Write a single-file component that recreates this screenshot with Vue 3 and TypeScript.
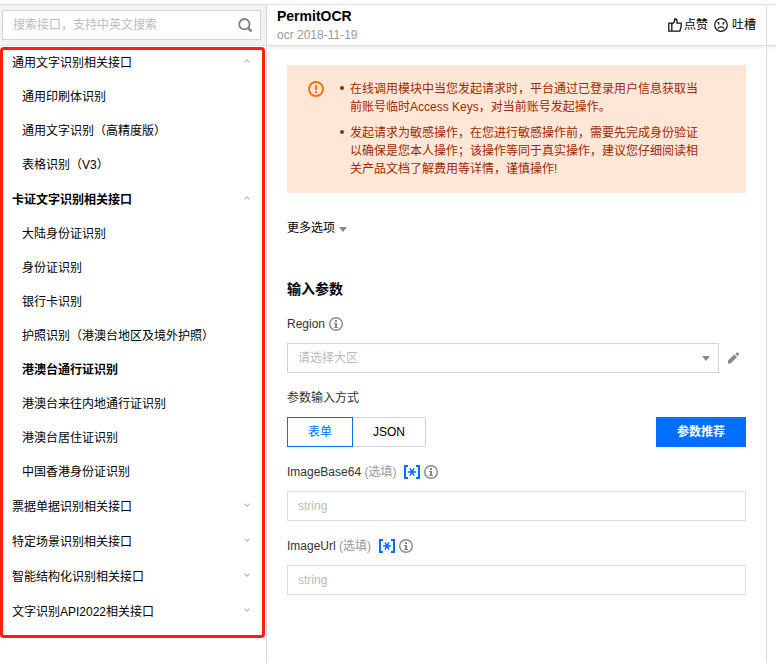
<script setup lang="ts">
import { ref } from 'vue'

interface ApiGroup {
  title: string
  open: boolean
  items: string[]
}

interface Param {
  name: string
  value: string
}

const groups = ref<ApiGroup[]>([
  { title: '通用文字识别相关接口', open: true, items: ['通用印刷体识别', '通用文字识别（高精度版）', '表格识别（V3）'] },
  {
    title: '卡证文字识别相关接口',
    open: true,
    items: [
      '大陆身份证识别',
      '身份证识别',
      '银行卡识别',
      '护照识别（港澳台地区及境外护照）',
      '港澳台通行证识别',
      '港澳台来往内地通行证识别',
      '港澳台居住证识别',
      '中国香港身份证识别',
    ],
  },
  { title: '票据单据识别相关接口', open: false, items: [] },
  { title: '特定场景识别相关接口', open: false, items: [] },
  { title: '智能结构化识别相关接口', open: false, items: [] },
  { title: '文字识别API2022相关接口', open: false, items: [] },
])

const keyword = ref('')
const current = ref('港澳台通行证识别')
const region = ref('')
const mode = ref<'form' | 'json'>('form')
const params = ref<Param[]>([
  { name: 'ImageBase64', value: '' },
  { name: 'ImageUrl', value: '' },
])
</script>

<template>
  <div class="page">
    <aside class="sidebar">
      <form class="search" @submit.prevent>
        <div class="search-box">
          <input v-model="keyword" type="text" aria-label="搜索接口" placeholder="搜索接口，支持中英文搜索" />
          <button type="submit" class="icon-btn" aria-label="搜索">
            <svg width="16" height="16" viewBox="0 0 16 16" fill="none" stroke="#808080" stroke-width="1.8">
              <circle cx="7.4" cy="7.2" r="5.2" />
              <path d="M11 10.8 14.6 14.4" stroke-width="2.4" />
            </svg>
          </button>
        </div>
      </form>
      <nav class="menu">
        <section v-for="group in groups" :key="group.title" class="group">
          <button
            type="button"
            class="row group-title"
            :class="{ active: group.items.includes(current) }"
            :aria-expanded="group.open"
            @click="group.open = !group.open"
          >
            <span>{{ group.title }}</span>
            <svg width="6" height="4" viewBox="0 0 6 4" fill="none" stroke="#bbb" stroke-width="1.2">
              <path :d="group.open ? 'M.4 3.4 3 .9 5.6 3.4' : 'M.4.6 3 3.1 5.6.6'" />
            </svg>
          </button>
          <template v-if="group.open">
            <a
              v-for="item in group.items"
              :key="item"
              href="#"
              class="row item"
              :class="{ active: item === current }"
              @click.prevent="current = item"
            >{{ item }}</a>
          </template>
        </section>
      </nav>
    </aside>

    <main class="main">
      <header class="bar">
        <div>
          <h1>PermitOCR</h1>
          <p class="version">ocr 2018-11-19</p>
        </div>
        <div class="feedback">
          <button type="button">
            <svg width="14" height="14" viewBox="0 0 14 14" fill="none" stroke="#111" stroke-width="1.3" stroke-linejoin="round">
              <path d="M.8 5.2h3v8h-3zM3.8 6.2 6.6 3.6V1.4c0-.9 2.4-.9 2.4 1v2.8h4.2v3.2l-1.4 4.8h-8" />
            </svg>
            <span>点赞</span>
          </button>
          <button type="button" class="wide">
            <svg width="14" height="14" viewBox="0 0 14 14" fill="none" stroke="#111" stroke-width="1.2">
              <circle cx="7" cy="7" r="6.3" />
              <path d="M4 10.4c1-2 5-2 6 0M3.4 4.4l2 .9M10.6 4.4l-2 .9" />
              <circle cx="4.8" cy="5.9" r=".5" fill="#111" stroke-width=".5" />
              <circle cx="9.2" cy="5.9" r=".5" fill="#111" stroke-width=".5" />
            </svg>
            <span>吐槽</span>
          </button>
        </div>
      </header>

      <div class="content">
        <div class="alert" role="alert">
          <svg width="16" height="16" viewBox="0 0 16 16" fill="none" stroke="#ff7200" stroke-width="2">
            <circle cx="8" cy="8" r="7" />
            <path d="M8 4v5M8 10v2" />
          </svg>
          <ul>
            <li>在线调用模块中当您发起请求时，平台通过已登录用户信息获取当前账号临时Access Keys，对当前账号发起操作。</li>
            <li>发起请求为敏感操作，在您进行敏感操作前，需要先完成身份验证以确保是您本人操作；该操作等同于真实操作，建议您仔细阅读相关产品文档了解费用等详情，谨慎操作!</li>
          </ul>
        </div>

        <button type="button" class="more">
          <span>更多选项</span>
          <svg width="8" height="5" viewBox="0 0 8 5"><path d="M0 0h8L4 5z" fill="#888" /></svg>
        </button>

        <h2>输入参数</h2>

        <div class="field">
          <div class="label">
            <label for="region">Region</label>
            <svg class="info" width="14" height="14" viewBox="0 0 14 14">
              <circle cx="7" cy="7" r="6.3" fill="none" stroke="#888" stroke-width="1.4" />
              <path d="M6 3h2v2H6zM5 6h3v4h1v1H5v-1h1V7H5z" fill="#888" />
            </svg>
          </div>
          <div class="region">
            <div class="select">
              <select id="region" v-model="region">
                <option value="" disabled>请选择大区</option>
                <option value="ap-guangzhou">ap-guangzhou</option>
              </select>
              <svg width="8" height="5" viewBox="0 0 8 5"><path d="M0 0h8L4 5z" fill="#888" /></svg>
            </div>
            <button type="button" class="icon-btn" aria-label="编辑">
              <svg width="12" height="12" viewBox="0 0 12 12" fill="#888">
                <path d="M0 8.6 6.4 2.4 9 5 2.6 11.4H0zM7.4 2 8.8.6 10.8 2.6 9.6 4.2z" />
                <path d="M8.6.4 9.4 0 11.4 2 10.8 2.8z" />
              </svg>
            </button>
          </div>
        </div>

        <div class="field">
          <div class="label">参数输入方式</div>
          <div class="modes">
            <div class="segment" role="group" aria-label="参数输入方式">
              <button type="button" class="form-mode" :class="{ on: mode === 'form' }" :aria-pressed="mode === 'form'" @click="mode = 'form'">表单</button>
              <button type="button" :class="{ on: mode === 'json' }" :aria-pressed="mode === 'json'" @click="mode = 'json'">JSON</button>
            </div>
            <button type="button" class="primary">参数推荐</button>
          </div>
        </div>

        <div v-for="param in params" :key="param.name" class="field">
          <div class="label">
            <label :for="param.name">{{ param.name }} <span class="optional">(选填)</span></label>
            <svg class="token" width="16" height="14" viewBox="0 0 16 14" fill="none" stroke="#006eff">
              <path d="M4 1H1v12h3M12 1h3v12h-3" stroke-width="2" />
              <path d="M4 7h8M6 3.4l4 7.2M10 3.4 6 10.6" stroke-width="1.5" />
            </svg>
            <svg class="info" width="14" height="14" viewBox="0 0 14 14">
              <circle cx="7" cy="7" r="6.3" fill="none" stroke="#888" stroke-width="1.4" />
              <path d="M6 3h2v2H6zM5 6h3v4h1v1H5v-1h1V7H5z" fill="#888" />
            </svg>
          </div>
          <input :id="param.name" v-model="param.value" class="text" type="text" placeholder="string" />
        </div>
      </div>
    </main>

    <div class="next-panel"><div class="bar"></div></div>
  </div>
</template>

<style>
body {
  margin: 0;
  background: #fff;
}
</style>

<style scoped>
* {
  box-sizing: border-box;
}

.page {
  display: grid;
  grid-template-columns: 267px minmax(0, 1fr) 10px;
  min-height: calc(100vh - 4px);
  margin-top: 4px;
  border-top: 1px solid #ddd;
  background: #fff;
  color: #000;
  font: 12px/18px "Liberation Sans", "Noto Sans CJK SC", sans-serif;
}

button {
  padding: 0;
  border: 0;
  background: none;
  color: inherit;
  font: inherit;
  cursor: pointer;
}

svg {
  display: block;
  flex: none;
}

h1,
h2,
p,
ul {
  margin: 0;
  padding: 0;
}

.sidebar {
  border-right: 1px solid #d8d8d8;
}

.search {
  height: 40px;
  padding: 5px 5px 5px 2px;
  background: #f2f2f2;
}

.search-box {
  display: flex;
  align-items: center;
  height: 30px;
  padding: 0 7px 0 10px;
  border: 1px solid #cfd5de;
  background: #fff;
}

.search-box input {
  flex: 1;
  min-width: 0;
  padding: 0;
  border: 0;
  outline: 0;
  background: none;
  font: inherit;
}

input::placeholder {
  color: #bbb;
  opacity: 1;
}

.menu {
  position: relative;
  padding-bottom: 8px;
  border-top: 1px solid #e4e4e4;
}

/* highlight frame laid over the interface list */
.menu::after {
  content: "";
  position: absolute;
  inset: 1px 1px 0 0;
  border: 3px solid #ff1e10;
  border-radius: 4px;
  pointer-events: none;
}

.group {
  padding-bottom: 1px;
}

.row {
  display: flex;
  align-items: center;
  width: 100%;
  height: 34px;
  color: #000;
  text-decoration: none;
}

.group-title {
  justify-content: space-between;
  padding: 0 16px 0 12px;
}

.group-title svg {
  margin-bottom: 4px;
}

.item {
  padding-left: 22px;
}

.active {
  font-weight: 700;
}

.bar {
  display: flex;
  justify-content: space-between;
  align-items: center;
  height: 41px;
  padding: 0 10px;
  border-bottom: 1px solid #ddd;
  box-shadow: 0 3px 3px -2px rgba(0, 0, 0, 0.12);
}

h1 {
  font-size: 14px;
  line-height: 20px;
}

.version {
  color: #999;
}

.feedback,
.feedback button {
  display: flex;
  align-items: center;
}

.feedback {
  gap: 6px;
}

.feedback button {
  gap: 2px;
}

.feedback .wide {
  gap: 4px;
}

.content {
  padding: 19px 20px 24px;
}

.alert {
  display: flex;
  gap: 26px;
  padding: 15px 40px 15px 21px;
  background: #ffe7d7;
  color: #a12700;
}

.alert svg {
  margin-top: 1px;
}

.alert ul {
  list-style: none;
}

.alert li {
  position: relative;
}

.alert li + li {
  margin-top: 8px;
}

.alert li::before {
  content: "";
  position: absolute;
  left: -10px;
  top: 6px;
  width: 4px;
  height: 4px;
  border-radius: 50%;
  background: #a12700;
}

.more {
  display: flex;
  align-items: center;
  gap: 4px;
  margin-top: 26px;
}

.more svg {
  margin-top: 2px;
}

h2 {
  margin-top: 42px;
  font-size: 14px;
  line-height: 20px;
}

.field {
  display: grid;
  gap: 9px;
  margin-top: 15px;
}

.label {
  display: flex;
  align-items: center;
  height: 20px;
  color: #333;
}

.optional {
  color: #999;
}

.info {
  margin-left: 4px;
}

.token {
  margin-left: 8px;
}

.region {
  display: flex;
  gap: 9px;
}

.select {
  position: relative;
  flex: 1;
}

.select select {
  display: block;
  width: 100%;
  height: 30px;
  padding: 0 10px;
  border: 1px solid #cfd5de;
  border-radius: 0;
  appearance: none;
  background: #fff;
  color: #bbb;
  font: inherit;
}

.select svg {
  position: absolute;
  right: 9px;
  top: 13px;
  pointer-events: none;
}

.region .icon-btn {
  display: flex;
  align-items: center;
  padding-right: 6px;
}

.modes {
  display: flex;
  justify-content: space-between;
}

.segment {
  display: flex;
}

.segment button {
  width: 73px;
  height: 30px;
  border: 1px solid #cfd5de;
  border-left-width: 0;
}

.segment .form-mode {
  width: 66px;
  border-left-width: 1px;
}

.segment .on {
  border-color: #006eff;
  color: #006eff;
}

.primary {
  width: 90px;
  height: 30px;
  background: #006eff;
  color: #fff;
  font-weight: 700;
}

.text {
  width: 100%;
  height: 30px;
  padding: 0 10px;
  border: 1px solid #ddd;
  border-radius: 0;
  background: #fff;
  color: #333;
  font: inherit;
}

.next-panel {
  overflow: hidden;
  border-left: 1px solid #d8d8d8;
}
</style>
